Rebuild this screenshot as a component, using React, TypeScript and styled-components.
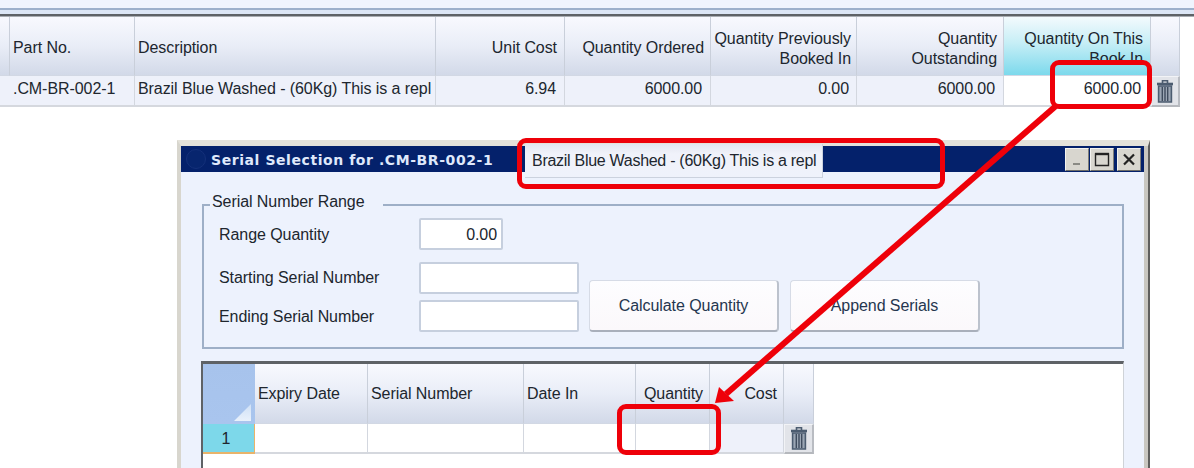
import React from "react";
import styled, { createGlobalStyle, css } from "styled-components";

const Global = createGlobalStyle`
  html, body { margin: 0; padding: 0; background: #fff; }
  body { font-family: "Liberation Sans", Arial, sans-serif; font-size: 16px; letter-spacing: -0.07px; color: #1d2530; }
  * { box-sizing: border-box; }
`;

const Page = styled.div`
  position: relative;
  width: 1194px;
  height: 468px;
  overflow: hidden;
  background: #fff;
  display: flex;
  flex-direction: column;
`;

const TopStrip = styled.div`
  height: 17px;
  flex: none;
  background: linear-gradient(#eff4fd 0 8px, #9cb0cb 8px 10px, #dce6f5 10px 14px, #5e6266 14px 16px, #a9adb2 16px 17px);
`;

const DataGrid = styled.div<{ $columns: string; $header: number; $row: number }>`
  display: grid;
  flex: none;
  grid-template-columns: ${(p) => p.$columns};
  grid-template-rows: ${(p) => p.$header}px ${(p) => p.$row}px;
  width: fit-content;
`;

const HeaderCell = styled.div<{ $right?: boolean; $active?: boolean; $pad?: number; $shift?: number }>`
  display: flex;
  align-items: center;
  justify-content: ${(p) => (p.$right ? "flex-end" : "flex-start")};
  text-align: ${(p) => (p.$right ? "right" : "left")};
  padding: ${(p) => p.$shift ?? 0}px ${(p) => p.$pad ?? 5}px 0 3px;
  line-height: 20px;
  color: #20262e;
  white-space: pre;
  overflow: hidden;
  border-right: 1px solid #c9cfda;
  border-bottom: 1px solid #d2d8e4;
  background: ${(p) =>
    p.$active
      ? "linear-gradient(#f3fafd, #c6eef6 45%, #7cd9ec)"
      : "linear-gradient(#f8f9fe, #e9edf7 50%, #d2d9e8)"};
`;

const Cell = styled.div<{ $right?: boolean; $white?: boolean; $pad?: number; $lift?: number }>`
  display: flex;
  align-items: center;
  justify-content: ${(p) => (p.$right ? "flex-end" : "flex-start")};
  padding: 0 ${(p) => p.$pad ?? 7}px ${(p) => p.$lift ?? 0}px 3px;
  white-space: nowrap;
  overflow: hidden;
  color: #20262e;
  background: ${(p) => (p.$white ? "#fff" : "#eef1fa")};
  border-right: 1px solid #d3d7df;
  border-bottom: 2px solid #d5d8de;
`;

const TrashCell = styled.div`
  display: flex;
  align-items: center;
  justify-content: center;
  background: #e2e4e9;
  border-right: 2px solid #b9bcc2;
  border-bottom: 2px solid #b5b8bd;
  border-top: 1px solid #f2f3f6;
  border-left: 1px solid #f2f3f6;
`;

const TrashIcon = () => (
  <svg width="20" height="25" viewBox="0 0 20 25" fill="none" stroke="#4c5c70" strokeWidth="1.6">
    <path d="M7.5 4V1.8h5V4" />
    <path d="M2 5h16" strokeWidth="2.6" />
    <path d="M3.6 7h12.8v16H3.6z" fill="#9ba6b4" />
    <path d="M7.3 8v14M10 8v14M12.7 8v14" strokeWidth="1.4" stroke="#3f4c5e" />
  </svg>
);

const WindowFrame = styled.div`
  flex: none;
  margin: 33px 0 0 177px;
  width: 973px;
  height: 328px;
  display: flex;
  flex-direction: column;
  background: #edf2fd;
  border-top: 6px solid #e4e2da;
  border-left: 4px solid #d8d6ce;
  border-right: 2px solid #5f5f5d;
  box-shadow: inset -4px 0 0 #c9c7c0;
`;

const TitleBar = styled.div`
  flex: none;
  height: 26px;
  width: 963px;
  display: flex;
  align-items: center;
  background: #04216b;
`;

const TitleBadge = styled.span`
  flex: none;
  width: 20px;
  height: 20px;
  margin: 0 5px;
  border-radius: 50%;
  border: 1px solid #14307a;
  background: #07256e;
`;

const TitleText = styled.span`
  flex: none;
  width: 314px;
  padding-top: 1px;
  font-family: "DejaVu Sans", Verdana, sans-serif;
  font-weight: 700;
  font-size: 14px;
  letter-spacing: 0.57px;
  color: #dfe8fb;
  white-space: nowrap;
`;

const TitleTab = styled.div`
  flex: none;
  width: 298px;
  height: 34px;
  margin: -2px 0 -6px;
  display: flex;
  align-items: center;
  padding: 0 0 0 7px;
  white-space: nowrap;
  letter-spacing: -0.28px;
  color: #20262e;
  background: linear-gradient(#e2e5ef, #f0f2fa 30%, #eff2fb);
  border-right: 1px solid #ccd2de;
  border-bottom: 1px solid #ccd2de;
`;

const WindowButtons = styled.div`
  margin-left: auto;
  margin-right: 3px;
  display: flex;
  gap: 1px;
`;

const WinButton = styled.span<{ $gap?: number }>`
  width: 24px;
  height: 23px;
  margin-left: ${(p) => p.$gap ?? 0}px;
  display: flex;
  align-items: center;
  justify-content: center;
  background: #d8d6cf;
  border: 1px solid;
  border-color: #f4f3ef #7f7e78 #6d6c66 #f4f3ef;
`;

const Group = styled.div`
  flex: none;
  margin: 32px 0 0 21px;
  width: 922px;
  height: 145px;
  border: 2px solid #9eafc7;
  display: flex;
  flex-direction: column;
`;

const Legend = styled.div`
  margin: -14px 0 0 6px;
  width: 173px;
  height: 20px;
  line-height: 20px;
  padding-left: 2px;
  background: #edf2fd;
  color: #20262e;
  white-space: nowrap;
`;

const GroupBody = styled.div`
  display: flex;
  align-items: flex-end;
  padding: 6px 0 0 15px;
`;

const Fields = styled.div`
  flex: none;
  width: 360px;
  display: flex;
  flex-direction: column;
`;

const FieldRow = styled.label<{ $top: number }>`
  display: flex;
  align-items: center;
  margin-top: ${(p) => p.$top}px;
`;

const FieldLabel = styled.span<{ $lift?: number }>`
  flex: none;
  width: 200px;
  padding: 2px 0 ${(p) => p.$lift ?? 0}px;
  color: #20262e;
  white-space: nowrap;
`;

const Input = styled.input<{ $short?: boolean }>`
  flex: none;
  width: ${(p) => (p.$short ? 84 : 160)}px;
  height: 32px;
  padding: 1px 4px 0;
  font: inherit;
  letter-spacing: inherit;
  color: #20262e;
  text-align: right;
  background: #fff;
  border: 2px solid #c6cfde;
  border-radius: 2px;
  outline: none;
`;

const Buttons = styled.div`
  flex: none;
  margin: 0 0 0 10px;
  display: flex;
  gap: 11px;
`;

const ActionButton = styled.button`
  width: 190px;
  height: 52px;
  padding: 0;
  font: inherit;
  letter-spacing: inherit;
  color: #25364f;
  background: linear-gradient(#fdfdff, #fbf8fb);
  border: 1px solid #d6dbe6;
  border-bottom: 2px solid #a9afbb;
  border-right: 2px solid #bcc2cd;
  border-radius: 4px;
`;

const SerialGrid = styled.div`
  flex: 1;
  margin: 12px 0 0 20px;
  width: 923px;
  background: #fff;
  border-top: 3px solid #5e6266;
  border-left: 2px solid #5e6266;
  border-right: 1px solid #cfd3d8;
`;

const CornerCell = styled.div`
  position: relative;
  background: linear-gradient(#a7c3ec, #a9c5ee);
  &::after {
    content: "";
    position: absolute;
    right: 4px;
    bottom: 3px;
    width: 17px;
    height: 17px;
    background: linear-gradient(#cfe0f6, #e9f1fb);
    clip-path: polygon(100% 0, 100% 100%, 0 100%);
  }
`;

const RowHead = styled.div`
  display: flex;
  align-items: center;
  justify-content: center;
  padding: 2px 5px 0 0;
  color: #20262e;
  background: #7dd8ea;
  border-right: 1px solid #e8b36a;
  border-bottom: 2px solid #e8b36a;
`;

const redOutline = css`
  position: absolute;
  border: 5px solid #ee0009;
  border-radius: 9px;
  pointer-events: none;
`;

const CalloutCell = styled.div`
  ${redOutline}
  left: 1050px;
  top: 60px;
  width: 102px;
  height: 49px;
`;

const CalloutTab = styled.div`
  ${redOutline}
  left: 517px;
  top: 138px;
  width: 428px;
  height: 51px;
`;

const CalloutQty = styled.div`
  ${redOutline}
  left: 617px;
  top: 404px;
  width: 104px;
  height: 51px;
`;

const ArrowLayer = styled.svg`
  position: absolute;
  inset: 0;
  pointer-events: none;
`;

const topHeaders: [string, boolean, boolean, number, number][] = [
  ["", false, false, 0, 0],
  ["Part No.", false, false, 5, 3],
  ["Description", false, false, 5, 3],
  ["Unit Cost", true, false, 7, 3],
  ["Quantity Ordered", true, false, 6, 3],
  ["Quantity Previously\nBooked In", true, false, 5, 5],
  ["Quantity\nOutstanding", true, false, 6, 5],
  ["Quantity On This\nBook In", true, true, 7, 5],
  ["", false, false, 0, 0],
];

const topCells: [string, boolean, boolean, number][] = [
  ["", false, false, 7],
  [".CM-BR-002-1", false, false, 7],
  ["Brazil Blue Washed - (60Kg) This is a repl", false, false, 2],
  ["6.94", true, false, 8],
  ["6000.00", true, false, 8],
  ["0.00", true, false, 7],
  ["6000.00", true, false, 8],
  ["6000.00", true, true, 9],
];

const serialHeaders: [string, boolean, number][] = [
  ["Expiry Date", false, 4],
  ["Serial Number", false, 4],
  ["Date In", false, 4],
  ["Quantity", true, 6],
  ["Cost", true, 6],
  ["", false, 0],
];

export default function App() {
  return (
    <Page>
      <Global />
      <TopStrip />
      <DataGrid $columns="10px 125px 301px 129px 146px 146px 147px 147px 29px" $header={59} $row={31}>
        {topHeaders.map(([text, right, active, pad, shift], i) => (
          <HeaderCell key={i} $right={right} $active={active} $pad={pad} $shift={shift}>
            {text}
          </HeaderCell>
        ))}
        {topCells.map(([text, right, white, pad], i) => (
          <Cell key={i} $right={right} $white={white} $lift={3} $pad={pad}>
            {text}
          </Cell>
        ))}
        <TrashCell>
          <TrashIcon />
        </TrashCell>
      </DataGrid>

      <WindowFrame>
        <TitleBar>
          <TitleBadge />
          <TitleText>Serial Selection for .CM-BR-002-1</TitleText>
          <TitleTab>Brazil Blue Washed - (60Kg) This is a repl</TitleTab>
          <WindowButtons>
            <WinButton>
              <svg width="13" height="13" viewBox="0 0 13 13">
                <path d="M2 11h7" stroke="#8a8a84" strokeWidth="2" />
              </svg>
            </WinButton>
            <WinButton>
              <svg width="16" height="15" viewBox="0 0 16 15" fill="none" stroke="#222">
                <path d="M1.5 2h13v11.5h-13z" strokeWidth="1.4" />
                <path d="M1 2h14" strokeWidth="2.4" />
              </svg>
            </WinButton>
            <WinButton $gap={2}>
              <svg width="14" height="13" viewBox="0 0 14 13" fill="none" stroke="#222" strokeWidth="2.2">
                <path d="M2 1.5l10 10M12 1.5l-10 10" />
              </svg>
            </WinButton>
          </WindowButtons>
        </TitleBar>

        <Group>
          <Legend>Serial Number Range</Legend>
          <GroupBody>
            <Fields>
              <FieldRow $top={0}>
                <FieldLabel>Range Quantity</FieldLabel>
                <Input $short readOnly defaultValue="0.00" />
              </FieldRow>
              <FieldRow $top={12}>
                <FieldLabel $lift={2}>Starting Serial Number</FieldLabel>
                <Input readOnly />
              </FieldRow>
              <FieldRow $top={6}>
                <FieldLabel>Ending Serial Number</FieldLabel>
                <Input readOnly />
              </FieldRow>
            </Fields>
            <Buttons>
              <ActionButton>Calculate Quantity</ActionButton>
              <ActionButton>Append Serials</ActionButton>
            </Buttons>
          </GroupBody>
        </Group>

        <SerialGrid>
          <DataGrid $columns="52px 113px 156px 112px 74px 74px 30px" $header={60} $row={30}>
            <CornerCell />
            {serialHeaders.map(([text, right, pad], i) => (
              <HeaderCell key={i} $right={right} $pad={pad} $shift={0}>
                {text}
              </HeaderCell>
            ))}
            <RowHead>1</RowHead>
            <Cell $white />
            <Cell $white />
            <Cell $white />
            <Cell $white />
            <Cell />
            <TrashCell>
              <TrashIcon />
            </TrashCell>
          </DataGrid>
        </SerialGrid>
      </WindowFrame>

      <CalloutCell />
      <CalloutTab />
      <CalloutQty />
      <ArrowLayer width="1194" height="468" viewBox="0 0 1194 468">
        <path d="M1057 105L726 394" stroke="#ee0009" strokeWidth="6" fill="none" />
        <path d="M715 403L719 387L734 401z" fill="#ee0009" />
      </ArrowLayer>
    </Page>
  );
}
